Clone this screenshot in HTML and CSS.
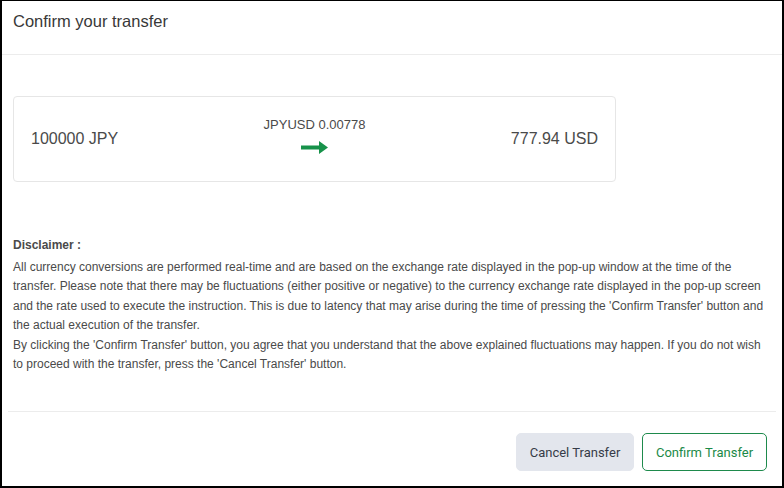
FILE: index.html
```html
<!DOCTYPE html>
<html lang="en">

<head>
    <meta charset="UTF-8" />
    <title>Confirm your transfer</title>
    <link rel="stylesheet" href="styles.css">
</head>

<body>
    <div class="modal">
        <div class="modal-header">
            <h2 class="modal-title">Confirm your transfer</h2>
        </div>

        <div class="modal-body">
            <div class="rate-card">
                <div class="amount from">100000 JPY</div>
                <div class="rate">
                    <span class="rate-label">JPYUSD 0.00778</span>
                    <svg class="arrow" width="27" height="13" viewBox="0 0 27 13">
                        <path d="M0 4.5h18V0l9 6.5-9 6.5V8.5H0z" fill="#17924a" />
                    </svg>
                </div>
                <div class="amount to">777.94 USD</div>
            </div>

            <div class="disclaimer">
                <div class="disclaimer-title">Disclaimer :</div>
                <p>All currency conversions are performed real-time and are based on the exchange rate displayed in the pop-up window at the time of the transfer. Please note that there may be fluctuations (either positive or negative) to the currency exchange rate displayed in the pop-up screen and the rate used to execute the instruction. This is due to latency that may arise during the time of pressing the 'Confirm Transfer' button and the actual execution of the transfer.</p>
                <p>By clicking the 'Confirm Transfer' button, you agree that you understand that the above explained fluctuations may happen. If you do not wish to proceed with the transfer, press the 'Cancel Transfer' button.</p>
            </div>
        </div>

        <div class="modal-footer">
            <button class="btn btn-cancel">Cancel Transfer</button>
            <button class="btn btn-confirm">Confirm Transfer</button>
        </div>
    </div>
</body>

</html>
```

FILE: styles.css
```css
* {
    box-sizing: border-box;
}

body {
    margin: 0;
    background-color: #fff;
    font-family: "Liberation Sans", Arial, sans-serif;
    color: #4a4a4a;
}

.modal {
    height: 488px;
    border: 2px solid #000;
    border-top-width: 1px;
    display: flex;
    flex-direction: column;
    background: #fff;
}

.modal-header {
    padding: 10px 11px 0;
    height: 54px;
    border-bottom: 1px solid #ececec;
}

.modal-title {
    margin: 0;
    font-size: 16.5px;
    line-height: 20px;
    font-weight: 400;
    color: #383838;
}

.modal-body {
    padding: 41px 11px 0;
    flex: 1;
}

.rate-card {
    width: 603px;
    height: 86px;
    border: 1px solid #e6e6e6;
    border-radius: 4px;
    padding: 0 17px;
    display: grid;
    grid-template-columns: 1fr auto 1fr;
    align-items: center;
}

.amount {
    font-size: 16px;
    color: #4a4a4a;
}

.amount.to {
    text-align: right;
}

.rate {
    display: flex;
    flex-direction: column;
    align-items: center;
    gap: 9px;
    margin-top: -8px;
}

.rate-label {
    font-size: 13px;
    color: #4a4a4a;
}

.arrow {
    display: block;
}

.disclaimer {
    margin-top: 54px;
    font-size: 12px;
    line-height: 19.5px;
    color: #4a4a4a;
}

.disclaimer-title {
    font-weight: 700;
    margin-bottom: 2px;
}

.disclaimer p {
    margin: 0;
}

.modal-footer {
    margin: 0 6px;
    border-top: 1px solid #ececec;
    padding: 21px 9px 15px 0;
    display: flex;
    justify-content: flex-end;
    gap: 8px;
}

.btn {
    font-family: Roboto, "Liberation Sans", sans-serif;
    font-size: 13px;
    height: 38px;
    border-radius: 5px;
    padding: 0;
    white-space: nowrap;
    cursor: pointer;
}

.btn-cancel {
    width: 118px;
    background-color: #e3e6ed;
    border: 1px solid #e3e6ed;
    color: #363c48;
}

.btn-confirm {
    width: 125px;
    background-color: #fff;
    border: 1px solid #1e8a4c;
    color: #1b8a48;
}
```
